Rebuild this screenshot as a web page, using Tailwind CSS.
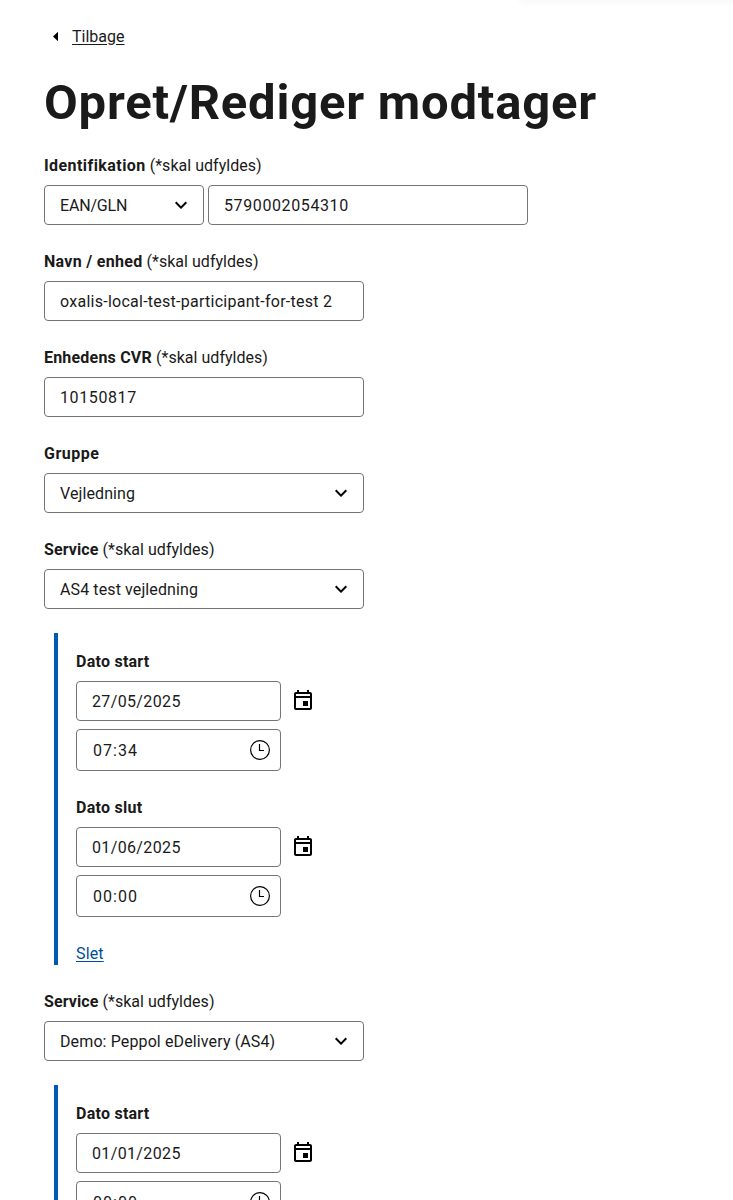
<!DOCTYPE html>
<html lang="da">
<head>
<meta charset="utf-8">
<title>Opret/Rediger modtager</title>
<script src="https://cdn.jsdelivr.net/npm/@tailwindcss/browser@4"></script>
</head>
<body class="bg-white h-[1200px] overflow-hidden font-['Roboto','Liberation_Sans',sans-serif] text-base leading-6 text-[#1a1a1a]">
<svg class="hidden">
  <symbol id="chevron" viewBox="0 0 24 24"><path d="M7.41 8.59 12 13.17l4.59-4.58L18 10l-6 6-6-6z"/></symbol>
  <symbol id="event" viewBox="0 0 24 24"><path d="M19 4h-1V2h-2v2H8V2H6v2H5c-1.11 0-1.99.9-1.99 2L3 20c0 1.1.89 2 2 2h14c1.1 0 2-.9 2-2V6c0-1.1-.9-2-2-2zm0 16H5V10h14v10zm0-12H5V6h14v2zM12 13h5v5h-5z"/></symbol>
  <symbol id="clock" viewBox="0 0 20 20"><circle cx="10" cy="10" r="9.4" fill="none" stroke="#000" stroke-width="1.2"/><path d="M9.5 4v6.5H14" fill="none" stroke="#000" stroke-width="1.2"/></symbol>
</svg>
<div class="h-0 ml-[522px] w-[240px] shadow-[0_0_6px_2px_rgba(0,0,0,0.05)]"></div>
<main class="pl-11 pt-6">
  <nav class="flex items-center h-6">
    <svg class="w-6 h-6" viewBox="0 0 24 24"><path d="M14 7.7v9.6l-5-4.8z"/></svg>
    <a class="ml-1 pt-0.5 underline underline-offset-2">Tilbage</a>
  </nav>
  <h1 class="mt-6 h-[60px] leading-[62px] text-[49px] font-bold tracking-[0.77px] whitespace-nowrap">Opret/Rediger modtager</h1>

  <form class="mt-[21px] flex flex-col gap-6 [&_label]:h-6 [&_label]:pt-px [&_div>span]:pt-0.5">
    <div class="flex flex-col gap-2">
      <label class="flex gap-1"><b class="tracking-[0.43px]">Identifikation</b><span class="tracking-[0.03px]">(*skal udfyldes)</span></label>
      <div class="flex gap-1">
        <div class="w-40 h-10 border border-[#747474] rounded-[4px] flex items-center justify-between pl-[15px] pr-[10px]"><span class="tracking-[-0.17px]">EAN/GLN</span><svg class="w-6 h-6"><use href="#chevron"/></svg></div>
        <div class="w-80 h-10 border border-[#747474] rounded-[4px] flex items-center pl-[15px]"><span class="tracking-[0.61px]">5790002054310</span></div>
      </div>
    </div>
    <div class="flex flex-col gap-2">
      <label class="flex gap-1"><b class="tracking-[0.3px]">Navn / enhed</b><span class="tracking-[0.03px]">(*skal udfyldes)</span></label>
      <div class="w-80 h-10 border border-[#747474] rounded-[4px] flex items-center pl-[15px]"><span class="tracking-[0.26px]">oxalis-local-test-participant-for-test 2</span></div>
    </div>
    <div class="flex flex-col gap-2">
      <label class="flex gap-1"><b class="tracking-[0.2px]">Enhedens CVR</b><span class="tracking-[0.03px]">(*skal udfyldes)</span></label>
      <div class="w-80 h-10 border border-[#747474] rounded-[4px] flex items-center pl-[15px]"><span class="tracking-[0.61px]">10150817</span></div>
    </div>
    <div class="flex flex-col gap-2">
      <label><b class="tracking-[0.52px]">Gruppe</b></label>
      <div class="w-80 h-10 border border-[#747474] rounded-[4px] flex items-center justify-between pl-[15px] pr-[10px]"><span class="tracking-[0.1px]">Vejledning</span><svg class="w-6 h-6"><use href="#chevron"/></svg></div>
    </div>
    <div class="flex flex-col gap-2">
      <label class="flex gap-1"><b class="tracking-[0.1px]">Service</b><span class="tracking-[0.03px]">(*skal udfyldes)</span></label>
      <div class="w-80 h-10 border border-[#747474] rounded-[4px] flex items-center justify-between pl-[15px] pr-[10px]"><span class="tracking-[0.11px]">AS4 test vejledning</span><svg class="w-6 h-6"><use href="#chevron"/></svg></div>
    </div>

    <section class="ml-[10px] pl-[18px] pt-4 border-l-4 border-[#0059b3] flex flex-col gap-6">
      <div class="flex flex-col gap-2">
        <label><b class="tracking-[0.25px]">Dato start</b></label>
        <div class="flex gap-[10px]">
          <div class="w-[205px] h-10 border border-[#747474] rounded-[4px] flex items-center pl-[15px]"><span class="tracking-[0.36px]">27/05/2025</span></div>
          <svg class="w-6 h-6 mt-[7px]"><use href="#event"/></svg>
        </div>
        <div class="w-[205px] h-[42px] border border-[#747474] rounded-[4px] flex items-center justify-between pl-4 pr-[10px]"><span class="tracking-[1.03px]">07:34</span><svg class="w-5 h-5"><use href="#clock"/></svg></div>
      </div>
      <div class="flex flex-col gap-2">
        <label><b class="tracking-[0.28px]">Dato slut</b></label>
        <div class="flex gap-[10px]">
          <div class="w-[205px] h-10 border border-[#747474] rounded-[4px] flex items-center pl-[15px]"><span class="tracking-[0.36px]">01/06/2025</span></div>
          <svg class="w-6 h-6 mt-[7px]"><use href="#event"/></svg>
        </div>
        <div class="w-[205px] h-[42px] border border-[#747474] rounded-[4px] flex items-center justify-between pl-4 pr-[10px]"><span class="tracking-[1.03px]">00:00</span><svg class="w-5 h-5"><use href="#clock"/></svg></div>
      </div>
      <a class="self-start h-6 pt-px text-[#004d99] underline underline-offset-2 tracking-[0.15px]">Slet</a>
    </section>

    <div class="flex flex-col gap-2">
      <label class="flex gap-1"><b class="tracking-[0.1px]">Service</b><span class="tracking-[0.03px]">(*skal udfyldes)</span></label>
      <div class="w-80 h-10 border border-[#747474] rounded-[4px] flex items-center justify-between pl-[15px] pr-[10px]"><span class="tracking-[0.12px]">Demo: Peppol eDelivery (AS4)</span><svg class="w-6 h-6"><use href="#chevron"/></svg></div>
    </div>

    <section class="ml-[10px] pl-[18px] pt-4 border-l-4 border-[#0059b3] flex flex-col gap-2">
      <label><b class="tracking-[0.25px]">Dato start</b></label>
      <div class="flex gap-[10px]">
        <div class="w-[205px] h-10 border border-[#747474] rounded-[4px] flex items-center pl-[15px]"><span class="tracking-[0.36px]">01/01/2025</span></div>
        <svg class="w-6 h-6 mt-[7px]"><use href="#event"/></svg>
      </div>
      <div class="w-[205px] h-[42px] border border-[#747474] rounded-[4px] flex items-center justify-between pl-4 pr-[10px]"><span class="tracking-[1.03px]">00:00</span><svg class="w-5 h-5"><use href="#clock"/></svg></div>
    </section>
  </form>
</main>
</body>
</html>
